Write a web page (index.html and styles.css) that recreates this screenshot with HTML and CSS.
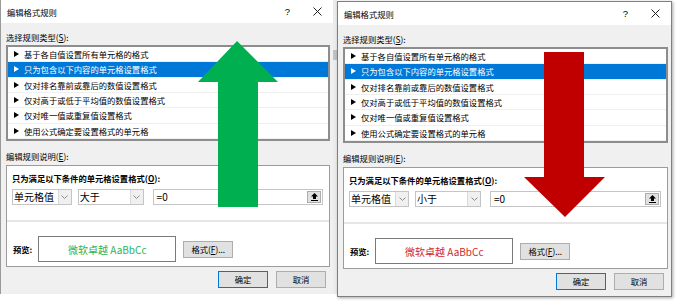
FILE: index.html
```html
<!DOCTYPE html>
<html lang="zh-CN">
<head>
    <meta charset="UTF-8">
    <title>编辑格式规则</title>
    <link rel="stylesheet" href="styles.css">
</head>
<body>
    <div class="screen">
        <div class="dialog dialog-left">
            <div class="titlebar">
                <span class="title">编辑格式规则</span>
                <span class="help">?</span>
                <svg class="close" width="9" height="9" viewBox="0 0 9 9"><path d="M0.5 0.5 L8.5 8.5 M8.5 0.5 L0.5 8.5" stroke="#222" stroke-width="1"/></svg>
            </div>
            <div class="content">
                <div class="label">选择规则类型(<u>S</u>):</div>
                <ul class="rules">
                    <li><i class="tri"></i>基于各自值设置所有单元格的格式</li>
                    <li class="selected"><i class="tri"></i>只为包含以下内容的单元格设置格式</li>
                    <li><i class="tri"></i>仅对排名靠前或靠后的数值设置格式</li>
                    <li><i class="tri"></i>仅对高于或低于平均值的数值设置格式</li>
                    <li><i class="tri"></i>仅对唯一值或重复值设置格式</li>
                    <li><i class="tri"></i>使用公式确定要设置格式的单元格</li>
                </ul>
                <div class="label label-desc">编辑规则说明(<u>E</u>):</div>
                <div class="desc">
                    <div class="desc-top">
                        <div class="bold">只为满足以下条件的单元格设置格式(<u>O</u>):</div>
                        <div class="controls">
                            <div class="combo combo-field"><span class="combo-text">单元格值</span><span class="drop"><svg width="7" height="4" viewBox="0 0 7 4"><polyline points="0.5,0.5 3.5,3.5 6.5,0.5" fill="none" stroke="#8a8a8a"/></svg></span></div>
                            <div class="combo combo-op"><span class="combo-text">大于</span><span class="drop"><svg width="7" height="4" viewBox="0 0 7 4"><polyline points="0.5,0.5 3.5,3.5 6.5,0.5" fill="none" stroke="#8a8a8a"/></svg></span></div>
                            <div class="input"><span class="input-text">=0</span><span class="pick"><svg width="7" height="8" viewBox="0 0 7 8"><polygon points="3.5,0 7,3.5 5,3.5 5,6 2,6 2,3.5 0,3.5" fill="#000"/><rect x="0" y="7" width="7" height="1" fill="#000"/></svg></span></div>
                        </div>
                    </div>
                    <div class="desc-bottom">
                        <span class="bold">预览:</span>
                        <div class="preview preview-green">微软卓越&nbsp;AaBbCc</div>
                        <button class="btn btn-format">格式(<u>F</u>)...</button>
                    </div>
                </div>
                <div class="actions">
                    <button class="btn btn-ok">确定</button>
                    <button class="btn">取消</button>
                </div>
            </div>
        </div>

        <div class="strip"><div class="thumb"></div></div>

        <div class="dialog dialog-right">
            <div class="titlebar">
                <span class="title">编辑格式规则</span>
                <span class="help">?</span>
                <svg class="close" width="9" height="9" viewBox="0 0 9 9"><path d="M0.5 0.5 L8.5 8.5 M8.5 0.5 L0.5 8.5" stroke="#222" stroke-width="1"/></svg>
            </div>
            <div class="content">
                <div class="label">选择规则类型(<u>S</u>):</div>
                <ul class="rules">
                    <li><i class="tri"></i>基于各自值设置所有单元格的格式</li>
                    <li class="selected"><i class="tri"></i>只为包含以下内容的单元格设置格式</li>
                    <li><i class="tri"></i>仅对排名靠前或靠后的数值设置格式</li>
                    <li><i class="tri"></i>仅对高于或低于平均值的数值设置格式</li>
                    <li><i class="tri"></i>仅对唯一值或重复值设置格式</li>
                    <li><i class="tri"></i>使用公式确定要设置格式的单元格</li>
                </ul>
                <div class="label label-desc">编辑规则说明(<u>E</u>):</div>
                <div class="desc">
                    <div class="desc-top">
                        <div class="bold">只为满足以下条件的单元格设置格式(<u>O</u>):</div>
                        <div class="controls">
                            <div class="combo combo-field"><span class="combo-text">单元格值</span><span class="drop"><svg width="7" height="4" viewBox="0 0 7 4"><polyline points="0.5,0.5 3.5,3.5 6.5,0.5" fill="none" stroke="#8a8a8a"/></svg></span></div>
                            <div class="combo combo-op"><span class="combo-text">小于</span><span class="drop"><svg width="7" height="4" viewBox="0 0 7 4"><polyline points="0.5,0.5 3.5,3.5 6.5,0.5" fill="none" stroke="#8a8a8a"/></svg></span></div>
                            <div class="input"><span class="input-text">=0</span><span class="pick"><svg width="7" height="8" viewBox="0 0 7 8"><polygon points="3.5,0 7,3.5 5,3.5 5,6 2,6 2,3.5 0,3.5" fill="#000"/><rect x="0" y="7" width="7" height="1" fill="#000"/></svg></span></div>
                        </div>
                    </div>
                    <div class="desc-bottom">
                        <span class="bold">预览:</span>
                        <div class="preview preview-red">微软卓越&nbsp;AaBbCc</div>
                        <button class="btn btn-format">格式(<u>F</u>)...</button>
                    </div>
                </div>
                <div class="actions">
                    <button class="btn btn-ok">确定</button>
                    <button class="btn">取消</button>
                </div>
            </div>
        </div>

        <svg class="arrows" width="677" height="301" viewBox="0 0 677 301">
            <polygon points="237,41 278,82 258,82 258,207 218,207 218,82 198,82" fill="#00b050"/>
            <polygon points="544,52 584,52 584,177 605,177 565,217 524,177 544,177" fill="#c00000"/>
        </svg>
    </div>
</body>
</html>
```

FILE: styles.css
```css
body {
    margin: 0;
    background: #fff;
    font-family: "Noto Sans CJK SC", "Microsoft YaHei", sans-serif;
    font-size: 8.3px;
    color: #000;
}

.screen {
    position: relative;
    display: flex;
    align-items: flex-start;
    width: 677px;
    height: 301px;
    overflow: hidden;
    background: #fff;
}

.dialog {
    box-sizing: border-box;
    display: flex;
    flex-direction: column;
    background: #f0f0f0;
}

.dialog-left {
    width: 333px;
    height: 294px;
    border-left: 1px solid #9a9a9a;
}

.dialog-right {
    width: 335px;
    height: 296px;
    margin-top: 1px;
    border: 1px solid #7f7f7f;
    box-shadow: 1px 1px 3px rgba(0,0,0,0.35);
}

.titlebar {
    display: flex;
    align-items: center;
    height: 23px;
    background: #fff;
    padding-left: 6px;
}

.title {
    flex: 1;
    line-height: 12px;
}

.help {
    font-family: "Liberation Sans", sans-serif;
    font-size: 9.5px;
    margin-right: 23px;
}

.close {
    margin-right: 11px;
}

.content {
    padding: 0 3px 0 5px;
}

.label {
    margin-top: 8px;
    line-height: 12px;
}

.label-desc {
    margin-top: 9px;
}

.rules {
    list-style: none;
    margin: 2px 0 0 0;
    padding: 0;
    height: 96px;
    box-sizing: border-box;
    border: 2px solid #8d8d8d;
    background: #fff;
}

.rules li {
    display: flex;
    align-items: center;
    height: 15.33px;
    box-sizing: border-box;
    padding-left: 6px;
    border-bottom: 1px solid #efefef;
}

.rules li.selected {
    background: #0078d7;
    color: #fff;
}

.tri {
    width: 0;
    height: 0;
    border-left: 5px solid #000;
    border-top: 3px solid transparent;
    border-bottom: 3px solid transparent;
    margin-right: 5px;
}

.selected .tri {
    border-left-color: #fff;
}

.desc {
    margin-top: 3px;
    height: 102px;
    box-sizing: border-box;
    border: 1px solid #9c9c9c;
    background: #fff;
}

.desc-top {
    padding: 6px 6px 15px 5px;
    border-bottom: 2px solid #e6e6e6;
}

.bold {
    font-weight: bold;
    line-height: 12px;
}

.controls {
    display: flex;
    margin-top: 5px;
    height: 16px;
}

.combo,
.input {
    display: flex;
    box-sizing: border-box;
    border: 1px solid #c4c4c4;
    background: #fff;
}

.combo-field {
    width: 60px;
    margin-right: 6px;
}

.combo-op {
    width: 66px;
    margin-right: 9px;
}

.combo-text,
.input-text {
    flex: 1;
    font-size: 10px;
    line-height: 14px;
    padding-left: 1px;
    white-space: nowrap;
}

.drop {
    display: flex;
    align-items: center;
    justify-content: center;
    width: 12px;
    background: #f0f0f0;
    border-left: 1px solid #d9d9d9;
}

.input {
    width: 171px;
}

.input-text {
    padding-left: 3px;
}

.pick {
    display: flex;
    align-items: center;
    justify-content: center;
    width: 14px;
    margin: 1px;
    background: #e1e1e1;
    border: 1px solid #adadad;
    box-sizing: border-box;
}

.desc-bottom {
    display: flex;
    align-items: center;
    padding: 14px 5px 4px 6px;
}

.preview {
    width: 138px;
    height: 26px;
    box-sizing: border-box;
    margin-left: 6px;
    border: 1px solid #7a7a7a;
    display: flex;
    align-items: center;
    justify-content: center;
    font-size: 10px;
}

.preview-green {
    color: #2bb55a;
}

.preview-red {
    color: #d22a2a;
}

.btn {
    font: inherit;
    color: #000;
    padding: 0;
    height: 17px;
    box-sizing: border-box;
    border: 1px solid #adadad;
    background: #e1e1e1;
    line-height: 15px;
}

.btn-format {
    width: 50px;
    margin-left: 7px;
}

.actions {
    display: flex;
    justify-content: flex-end;
    gap: 8px;
    margin-top: 4px;
    padding-right: 4px;
}

.actions .btn {
    width: 50px;
}

.btn-ok {
    border-color: #0078d7;
}

.strip {
    width: 4px;
    height: 294px;
    background: #ececec;
}

.thumb {
    margin-top: 50px;
    height: 10px;
    background: #c2c2c2;
}

.arrows {
    position: absolute;
    top: 0;
    left: 0;
    pointer-events: none;
}
```
